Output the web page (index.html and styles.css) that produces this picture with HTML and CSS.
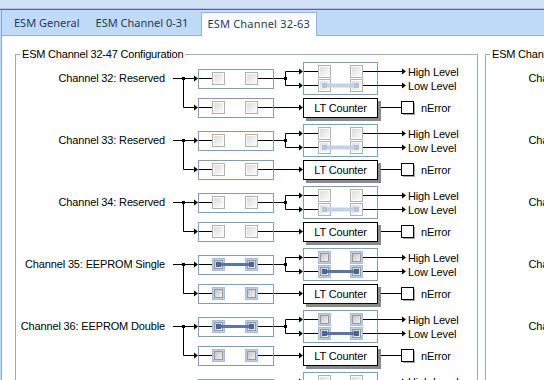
FILE: index.html
```html
<!DOCTYPE html>
<html lang="en">
<head>
	<meta charset="UTF-8">
	<title>ESM Channel 32-63</title>
	<link rel="stylesheet" href="styles.css">
</head>
<body>
<svg class="svg_defs" width="0" height="0">
	<defs>
		<linearGradient id="g_off" x1="0" y1="0" x2="1" y2="1">
			<stop offset="0" stop-color="#dcdcdc"/>
			<stop offset="1" stop-color="#fbfbfb"/>
		</linearGradient>
		<linearGradient id="g_on" x1="0" y1="0" x2="1" y2="1">
			<stop offset="0" stop-color="#c2c2c2"/>
			<stop offset="1" stop-color="#f4f4f4"/>
		</linearGradient>
	</defs>
</svg>
<div class="main_wrap">
	<div class="title_strip"></div>
	<div class="tab_wrap">
		<div class="tab_frame">
			<ul class="tab_bar">
				<li class="tab">ESM General</li>
				<li class="tab">ESM Channel 0-31</li>
				<li class="tab tab_on">ESM Channel 32-63</li>
			</ul>
			<div class="tab_page">
				<div class="group_list">
					<fieldset class="group_box">
						<legend>ESM Channel 32-47 Configuration</legend>
						<div class="row_list" id="rows_a"></div>
					</fieldset>
					<fieldset class="group_box">
						<legend>ESM Channel 48-63 Configuration</legend>
						<div class="row_list" id="rows_b"></div>
					</fieldset>
				</div>
			</div>
		</div>
	</div>
</div>

<script>
  (function(){

    var rect = function(x, y, w, h, cls){
      return '<rect x="'+x+'" y="'+y+'" width="'+w+'" height="'+h+'" class="'+cls+'"/>';
    };
    var line = function(d){
      return '<path d="'+d+'" class="dg_line"/>';
    };
    var arrow = function(x, y){
      return '<polygon points="'+x+','+y+' '+(x-4)+','+(y-3)+' '+(x-4)+','+(y+3)+'" class="dg_fill"/>';
    };
    var text = function(x, y, str, cls){
      return '<text x="'+x+'" y="'+y+'" class="'+(cls || 'dg_text')+'">'+str+'</text>';
    };

    // 스위치 버튼 하나 (13px)
    var square = function(x, y, on){
      if(on){
        return rect(x+.5, y+.5, 12, 12, 'sq_ring') + '<rect x="'+(x+2.5)+'" y="'+(y+2.5)+'" width="8" height="8" class="sq_face_on" fill="url(#g_on)"/>';
      }
      return rect(x+.5, y+.5, 12, 12, 'sq_edge') + '<rect x="'+(x+2)+'" y="'+(y+2)+'" width="9" height="9" fill="url(#g_off)"/>';
    };

    // 버튼 두개 + 연결바
    var pair = function(x1, x2, y, on, link){
      var cy = y + 6.5;
      var out = square(x1, y, on) + square(x2, y, on);
      if(link){
        out += '<path d="M'+(x1+6.5)+' '+cy+'H'+(x2+6.5)+'" class="bar_'+link+'"/>';
        out += rect(x1+4, y+4, 5, 5, 'dot_'+link) + rect(x2+4, y+4, 5, 5, 'dot_'+link);
      }
      return out;
    };

    var drawDiagram = function(on){
      var s = '';
      // 입력 분기
      s += line('M173 16.5H195') + rect(182, 15, 3, 3, 'dg_fill') + arrow(198, 16.5);
      s += line('M183.5 16.5V45.5H195') + arrow(198, 45.5);

      // 위 스위치
      s += rect(198.5, 7.5, 75, 19, 'sw_box');
      s += line('M199 16.5H212M258 16.5H273');
      s += pair(212, 245, 10, on, on ? 'on' : '');

      // 아래 스위치
      s += rect(198.5, 36.5, 75, 19, 'sw_box');
      s += line('M199 45.5H212M258 45.5H273');
      s += pair(212, 245, 39, on, '');

      // 레벨 스위치
      s += line('M274 16.5H285.5') + rect(284, 15, 3, 3, 'dg_fill');
      s += line('M285.5 9.5V23.5M285.5 9.5H300M285.5 23.5H300') + arrow(303, 9.5) + arrow(303, 23.5);
      s += rect(303.5, 0.5, 74, 32, 'sw_box');
      s += line('M304 9.5H318M363 9.5H403M304 23.5H318M363 23.5H403') + arrow(406, 9.5) + arrow(406, 23.5);
      s += pair(318, 350, 3, on, '');
      s += pair(318, 350, 17, on, on ? 'on' : 'dim');
      s += text(408, 13.5, 'High Level') + text(408, 27.5, 'Low Level');

      // LT Counter
      s += line('M274 45.5H300') + arrow(303, 45.5);
      s += rect(306, 39, 75, 20, 'lt_shadow') + rect(303.5, 36.5, 74, 19, 'lt_box');
      s += text(340.5, 49.5, 'LT Counter', 'dg_text dg_center');

      // nError
      s += line('M381 45.5H401');
      s += rect(403, 41, 12, 12, 'chk_shadow') + rect(401.5, 39.5, 12, 12, 'chk_box');
      s += text(421, 49.5, 'nError');
      return s;
    };

    var render = function(id, list){
      var context = document.getElementById(id);
      var fragment = document.createDocumentFragment();
      list.forEach(function(ch){
        var row = document.createElement('div');
        row.className = 'ch_row';
        row.innerHTML = '<div class="ch_label">'+ch.name+'</div>'
          + '<svg class="ch_diagram" viewBox="165 0 310 62">'+drawDiagram(ch.on)+'</svg>';
        fragment.appendChild(row);
      });
      context.appendChild(fragment);
    };

    render('rows_a', [
      {name: 'Channel 32: Reserved', on: false},
      {name: 'Channel 33: Reserved', on: false},
      {name: 'Channel 34: Reserved', on: false},
      {name: 'Channel 35: EEPROM Single', on: true},
      {name: 'Channel 36: EEPROM Double', on: true},
      {name: 'Channel 37: Reserved', on: false}
    ]);
    render('rows_b', [
      {name: 'Channel 48: Reserved', on: false},
      {name: 'Channel 49: Reserved', on: false},
      {name: 'Channel 50: Reserved', on: false},
      {name: 'Channel 51: Reserved', on: false},
      {name: 'Channel 52: Reserved', on: false},
      {name: 'Channel 53: Reserved', on: false}
    ]);

  })();
</script>
</body>
</html>
```

FILE: styles.css
```css
body,div,ul,li,fieldset,legend{margin:0;padding:0}
ul,li{list-style:none}
body{background:#fff;font-size:11px;line-height:13px;font-family:'Liberation Sans',Arial,sans-serif;color:#000}
.svg_defs{display:block;width:0;height:0;overflow:hidden}

.main_wrap{width:544px;height:380px;overflow:hidden;background:#fff}
.title_strip{height:8px;background:#d2e2f6;border-bottom:1px solid #a9c3e4}
.tab_wrap{border-top:1px solid #676767;background:#c0dbf9;padding-left:1px}
.tab_frame{border-left:1px solid #8ea5c4}

.tab_bar{display:flex;align-items:flex-end;height:25px;padding-left:6px}
.tab_bar .tab{height:23px;margin-left:4px;padding:0 6px;line-height:22px;font-family:'Noto Sans',sans-serif;font-size:11px;color:#1e395b;white-space:nowrap}
.tab_bar .tab:first-child{margin-left:0}
.tab_bar .tab_on{position:relative;z-index:1;height:23px;margin-left:7px;margin-bottom:-1px;padding:0 6px 0 5px;border:1px solid #98b2d5;border-bottom:0;background:linear-gradient(#f3f8fe,#fff 40%);letter-spacing:0.2px}

.tab_page{height:400px;border-top:1px solid #8fb1dc;background:#fff}
.group_list{display:flex;padding:11px 0 0 13px}
.group_box{flex:none;box-sizing:border-box;width:463px;min-width:0;margin-right:7px;padding:1px 0 0;border:1px solid #9aabc3}
.group_box legend{margin-left:4px;padding:0 2px;line-height:14px;letter-spacing:-0.2px}

.ch_row{display:flex;height:62px}
.ch_label{flex:none;width:149px;margin-top:10px;text-align:right;white-space:nowrap;letter-spacing:-0.15px}
.ch_diagram{display:block;flex:none;width:310px;height:62px}

/* 다이어그램 */
.dg_line{fill:none;stroke:#000;stroke-width:1}
.dg_fill{fill:#000}
.dg_text{font-family:'Liberation Sans',Arial,sans-serif;font-size:11px;letter-spacing:-0.15px;fill:#000}
.dg_center{text-anchor:middle}
.sw_box{fill:none;stroke:#7f9cb9}
.sq_edge{fill:#fbfbfb;stroke:#b0b0b0}
.sq_ring{fill:#bdcee6;stroke:#a7bddb}
.sq_face_on{stroke:#999}
.bar_on{fill:none;stroke:#5877a6;stroke-width:3}
.bar_dim{fill:none;stroke:#c5d1e3;stroke-width:4}
.dot_on{fill:#46679a}
.dot_dim{fill:#b3c3da}
.lt_shadow{fill:#8a8a8a}
.lt_box{fill:#fff;stroke:#000}
.chk_shadow{fill:#a5a5a5}
.chk_box{fill:#fff;stroke:#000}
```
